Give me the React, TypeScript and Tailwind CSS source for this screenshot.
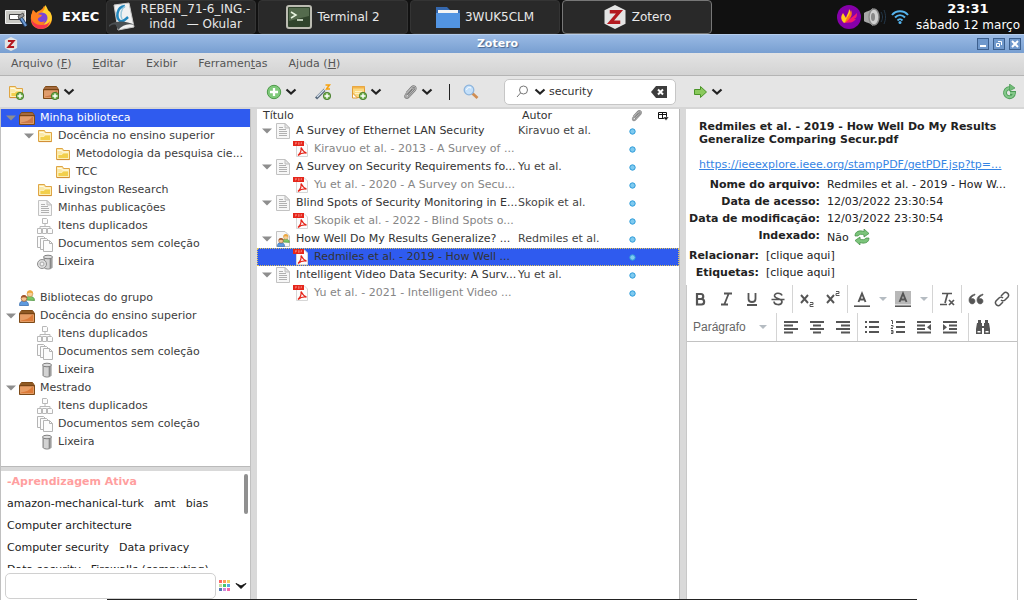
import React, { useState } from 'react';
import { clsx } from 'clsx';

type IconName =
  | 'library' | 'group' | 'folder' | 'page' | 'duplicates' | 'unfiled' | 'trashFull' | 'trash' | 'people' | 'pagePeople' | 'pdf';

interface TreeNode {
  label: string;
  icon: IconName;
  level: number;
  open?: boolean;
  selected?: boolean;
}

interface Item {
  title: string;
  author?: string;
  icon: IconName;
  selected?: boolean;
}

const libraryTree: (TreeNode | null)[] = [
  { label: 'Minha biblioteca', icon: 'library', level: 0, open: true, selected: true },
  { label: 'Docência no ensino superior', icon: 'folder', level: 1, open: true },
  { label: 'Metodologia da pesquisa cie...', icon: 'folder', level: 2 },
  { label: 'TCC', icon: 'folder', level: 2 },
  { label: 'Livingston Research', icon: 'folder', level: 1 },
  { label: 'Minhas publicações', icon: 'page', level: 1 },
  { label: 'Itens duplicados', icon: 'duplicates', level: 1 },
  { label: 'Documentos sem coleção', icon: 'unfiled', level: 1 },
  { label: 'Lixeira', icon: 'trashFull', level: 1 },
  null,
  { label: 'Bibliotecas do grupo', icon: 'people', level: 0 },
  { label: 'Docência do ensino superior', icon: 'group', level: 0, open: true },
  { label: 'Itens duplicados', icon: 'duplicates', level: 1 },
  { label: 'Documentos sem coleção', icon: 'unfiled', level: 1 },
  { label: 'Lixeira', icon: 'trash', level: 1 },
  { label: 'Mestrado', icon: 'group', level: 0, open: true },
  { label: 'Itens duplicados', icon: 'duplicates', level: 1 },
  { label: 'Documentos sem coleção', icon: 'unfiled', level: 1 },
  { label: 'Lixeira', icon: 'trash', level: 1 },
];

const items: Item[] = [
  { title: 'A Survey of Ethernet LAN Security', author: 'Kiravuo et al.', icon: 'page' },
  { title: 'Kiravuo et al. - 2013 - A Survey of ...', icon: 'pdf' },
  { title: 'A Survey on Security Requirements fo...', author: 'Yu et al.', icon: 'page' },
  { title: 'Yu et al. - 2020 - A Survey on Secu...', icon: 'pdf' },
  { title: 'Blind Spots of Security Monitoring in E...', author: 'Skopik et al.', icon: 'page' },
  { title: 'Skopik et al. - 2022 - Blind Spots o...', icon: 'pdf' },
  { title: 'How Well Do My Results Generalize? ...', author: 'Redmiles et al.', icon: 'pagePeople' },
  { title: 'Redmiles et al. - 2019 - How Well ...', icon: 'pdf', selected: true },
  { title: 'Intelligent Video Data Security: A Surv...', author: 'Yu et al.', icon: 'page' },
  { title: 'Yu et al. - 2021 - Intelligent Video ...', icon: 'pdf' },
];

const tagRows = [
  ['amazon-mechanical-turk', 'amt', 'bias'],
  ['Computer architecture'],
  ['Computer security', 'Data privacy'],
  ['Data security', 'Firewalls (computing)'],
];

const fileInfo = [
  { label: 'Nome do arquivo:', value: 'Redmiles et al. - 2019 - How W...' },
  { label: 'Data de acesso:', value: '12/03/2022 23:30:54' },
  { label: 'Data de modificação:', value: '12/03/2022 23:30:54' },
];

/* ---------- icons ---------- */

function Svg({ size = 16, children }: { size?: number; children: React.ReactNode }) {
  return (
    <svg width={size} height={size} viewBox="0 0 16 16" fill="none" className="block shrink-0" aria-hidden="true">
      {children}
    </svg>
  );
}

function Box({ bright }: { bright?: boolean }) {
  return (
    <>
      <path d="M2.5 2.5h11l2 3v9H.5v-9z" fill="#b5652d" stroke="#7d4a17" />
      <path d="M2.8 3h10.4l1.600 2H1.200z" fill={bright ? '#8f5a24' : '#a56a3c'} />
      <path d="M1.500 6.500h13v7h-13z" fill={bright ? '#dc7a38' : '#cc7848'} stroke="#ecb07c" strokeWidth=".7" />
      <path d="M2 12.500V7h11c-2 3-6 5-11 5.500z" fill="#f0b98a" opacity=".55" />
      <path d="M.5 5.700h15" stroke="#6b3d10" />
    </>
  );
}

function Folder() {
  return (
    <>
      <path d="M1.5 13.5v-11h6l1 2h6v9z" fill="#fbe8a6" stroke="#dfa544" />
      <path d="M2.5 4.5h4l1 1.5h6" stroke="#fffbe9" />
      <path d="M3 12.5V8.5h4l1-1.5h5.5v5.5z" fill="#f2cf4c" stroke="#fff6cf" strokeWidth=".7" />
      <path d="M2 13.6h12.5" stroke="#d18d35" />
    </>
  );
}

function Page() {
  return (
    <>
      <path d="M1.500.5h8.500l4.500 4.500v10.500h-13z" fill="#f7f7f7" stroke="#c2c2c2" />
      <path d="M10 .5V5h4.500z" fill="#e8e8e8" stroke="#bdbdbd" />
      <path d="M4 4.500h4M4 6.500h7M4 8.500h8M4 10.500h8M4 12.500h8" stroke="#b0b0b0" />
    </>
  );
}

function People() {
  return (
    <>
      <path d="M6.500 10c0-3 2-3.500 4.500-3.500s4.500 1 4.500 4z" fill="#7cc765" stroke="#3f8a33" strokeWidth=".7" />
      <circle cx="11" cy="3.800" r="2.900" fill="#f7cf98" stroke="#c08b3c" strokeWidth=".6" />
      <path d="M8 3.500c-.5-4.500 6.500-4.500 6 0-2-1-4-1-6 0z" fill="#eda73f" />
      <path d="M.5 15.500c0-4 2-4.500 4.500-4.500s4.500 1 4.500 4.500z" fill="#5e9ade" stroke="#2a62a8" strokeWidth=".7" />
      <circle cx="5" cy="8.500" r="2.900" fill="#f5c28e" stroke="#8a4a20" strokeWidth=".6" />
      <path d="M2 8c0-4 6-4 6 0-2-1-4-1-6 0z" fill="#a3562a" />
    </>
  );
}

function Can({ x = 0 }: { x?: number }) {
  return (
    <g transform={`translate(${x} 0)`}>
      <path d="M4 3.500h8v10c-1 2-7 2-8 0z" fill="#b9b9b9" stroke="#858585" />
      <path d="M6 5v9M8 5v9.500" stroke="#ededed" />
      <path d="M10.500 5v9" stroke="#888" />
      <ellipse cx="8" cy="3" rx="4.500" ry="1.800" fill="#dcdcdc" stroke="#808080" />
    </g>
  );
}

function TreeIcon({ name }: { name: IconName }) {
  return (
    <Svg>
      {name === 'library' && <Box />}
      {name === 'group' && <Box bright />}
      {name === 'folder' && <Folder />}
      {name === 'page' && <Page />}
      {name === 'people' && <People />}
      {name === 'trash' && <Can x={2} />}
      {name === 'pagePeople' && (
        <>
          <path d="M1.500.5h8.500l4.500 4.500v10.500h-13z" fill="#f7f7f7" stroke="#c2c2c2" />
          <g transform="translate(2 3) scale(.8)"><People /></g>
        </>
      )}
      {name === 'duplicates' && (
        <g fill="#fcfcfc" stroke="#b8b8b8">
          <path d="M5.500.5h4l1 1v4h-5zM8 6v2.500M3 10V8.500h10V10M.5 10.500h4v5h-4zM5.500 10.500h4v5h-4zM10.500 10.500h4l1 1v4h-5z" />
        </g>
      )}
      {name === 'unfiled' && (
        <g fill="#fcfcfc" stroke="#b4b4b4">
          <path d="M.5.5h6l2 2v9h-8z" />
          <path d="M3.500 2.500h6l2 2v9h-8z" />
          <path d="M6.500 4.500h6l3 3v8h-9z" />
          <path d="M12.500 4.500v3h3" fill="none" />
        </g>
      )}
      {name === 'trashFull' && (
        <>
          <Can x={3} />
          <circle cx="5" cy="10" r="4.500" fill="#dedede" stroke="#8e8e8e" />
          <circle cx="5" cy="10" r="2" fill="#f1f1f1" stroke="#a9a9a9" />
        </>
      )}
      {name === 'pdf' && (
        <>
          <path d="M3.500.5h7.500l3.500 3.500v11.500h-11z" fill="#fcfcfc" stroke="#d6d6d6" />
          <path d="M0 0h11v5H0z" fill="#e5261b" />
          <path d="M2.500 3.500v-2h1v1h-1M5.500 1.500v2h.7v-2zM8 3.500v-2h1M8 2.500h1" stroke="#f9a39d" strokeWidth=".5" />
          <path d="M8 6.500c1.500 3 2.500 4.500 5.500 5.500-3-.5-5.500 0-8.500 2.500 2.500-2.500 3.700-5 3-8z" stroke="#e5261b" strokeWidth="1.300" />
        </>
      )}
    </Svg>
  );
}

function Plus() {
  return (
    <>
      <circle cx="12" cy="12" r="3.700" fill="#6fae4b" stroke="#3d7424" strokeWidth=".8" />
      <path d="M12 9.500v5M9.500 12h5" stroke="#fff" strokeWidth="1.400" />
    </>
  );
}

function Chevron() {
  return (
    <svg width="12" height="8" viewBox="0 0 12 8" className="block shrink-0" aria-hidden="true">
      <path d="M1.500 1.500 6 5.500l4.500-4" fill="none" stroke="#222" strokeWidth="2.200" />
    </svg>
  );
}

function Clip({ size = 16 }: { size?: number }) {
  const wire = 'M6 11.500 11 6c1-1.200 0-2.500-1.500-1.500L4 10.500c-2 2.500.5 4.500 2.500 2.500l6.500-7c2-2.500-1-5-3.500-2.500L4.500 9';
  return (
    <Svg size={size}>
      <path d={wire} stroke="#777" strokeWidth="2" />
      <path d={wire} stroke="#cfcfcf" strokeWidth=".8" />
    </Svg>
  );
}

function Twisty() {
  return (
    <svg width="10" height="6" viewBox="0 0 10 6" className="block" aria-hidden="true">
      <path d="M0 .5h10L5 5.500z" fill="#8e8e8e" />
    </svg>
  );
}

function ZoteroHex({ size }: { size: number }) {
  return (
    <Svg size={size}>
      <path d="m8 0 7 3.500v9L8 16l-7-3.500v-9z" fill="#e4e4e4" />
      <path d="M4.500 4.500h6.500L5 11.500h6.500" stroke="#b3191f" strokeWidth="2.200" />
    </Svg>
  );
}

/* ---------- desktop panel ---------- */

function TaskButton({ active, children }: { active?: boolean; children: React.ReactNode }) {
  return (
    <button
      type="button"
      className={clsx(
        'h-[34px] w-[150px] shrink-0 flex items-center justify-center gap-[5px] rounded-[4px] border bg-[#292929] text-xs leading-[15px] text-[#e8e8e8]',
        active ? 'border-[#777]' : 'border-[#343434]'
      )}
    >
      {children}
    </button>
  );
}

function Taskbar() {
  return (
    <div className="flex h-[34px] shrink-0 items-center bg-[#111] text-white">
      <div className="flex h-full w-[106px] shrink-0 items-center bg-[#202020] pl-1">
        <svg width="24" height="24" viewBox="0 0 24 24" fill="none" aria-hidden="true">
          <path d="M1.500 5.500h20v13h-20z" fill="#c9c9c4" stroke="#efefef" />
          <path d="M5.500 9.500h12v5h-12z" fill="#fff" stroke="#444" />
          <path d="m16 12 6 9" stroke="#203f68" strokeWidth="4" />
          <path d="m17 13 5 8" stroke="#6c9ad3" strokeWidth="2" />
          <path d="m14 11 5-3 1 3-5 3z" fill="#999" stroke="#555" />
        </svg>
        <svg width="26" height="26" viewBox="0 0 26 26" className="ml-px" aria-hidden="true">
          <path d="M15 2c4 3 3 5 6 6 4 6 2 16-8 17C4 25 1 19 2 12L4 6l3 3c3-3 6-2 8-7z" fill="#ff8a16" />
          <path d="M16 1c3 3 2 5 5 7 5 8-1 15-8 15 5-5 5-9-1-14 3-2 4-4 4-8z" fill="#ffd02e" />
          <circle cx="13" cy="14" r="5.500" fill="#7a45d6" />
          <path d="M2 12l2-6 4 4 5 1c-1 3-5 2-4 5 2 3 5 2 7 1-2 6-13 5-14-5z" fill="#ff8020" />
          <path d="M2 14c1 4 5 7 10 7 4 0 7-1 9-4-1 5-5 8-9 8-6 0-10-5-10-11z" fill="#f5354f" />
        </svg>
        <span className="ml-[7px] text-[13px] font-bold">EXEC</span>
      </div>
      <div className="flex flex-1 gap-[2px]">
        <TaskButton>
          <svg width="28" height="30" viewBox="0 0 28 30" fill="none" className="-ml-1 shrink-0" aria-hidden="true">
            <path d="M6 3 21 1l5 24-16 3z" fill="#f1f1f1" stroke="#c7c7c7" />
            <path d="M17 4c-9 1-9 12-5 15 4 1 6-2 8-4" stroke="#2387bd" strokeWidth="2.500" />
            <path d="M17 4c-4 3-5 9-3 13" stroke="#9ac8dc" strokeWidth="1.500" />
            <path d="M1 23c8-5 17-4 26 0-8-2-12 0-17 5L8 23c-3-1-5 0-7 2z" fill="#4b5053" />
          </svg>
          <span className="whitespace-pre text-center">{'REBEN_71-6_ING.-\nindd   — Okular'}</span>
        </TaskButton>
        <TaskButton>
          <svg width="26" height="24" viewBox="0 0 26 24" fill="none" aria-hidden="true">
            <rect x="1" y="1" width="24" height="22" rx="2" fill="#30442c" stroke="#bcbcb2" strokeWidth="2" />
            <path d="M3 3h20v8L3 16z" fill="#546b4d" />
            <path d="m5 7 5 3-5 3M11 15h6" stroke="#e7f4df" strokeWidth="1.500" />
          </svg>
          <span>Terminal 2</span>
        </TaskButton>
        <TaskButton>
          <svg width="24" height="22" viewBox="0 0 24 22" aria-hidden="true">
            <path d="M0 1h11l3 3h10v8H0z" fill="#3568ae" />
            <path d="M2 4h20v3H2z" fill="#f4f4f4" />
            <path d="M0 7h24v15H0z" fill="#5294e2" />
          </svg>
          <span>3WUK5CLM</span>
        </TaskButton>
        <TaskButton active>
          <ZoteroHex size={24} />
          <span>Zotero</span>
        </TaskButton>
      </div>
      <div className="flex shrink-0 items-center pr-1">
        <svg width="24" height="24" viewBox="0 0 24 24" aria-hidden="true">
          <circle cx="12" cy="12" r="12" fill="#8600a9" />
          <path d="M7 18C3 14 4 11 6 8c1 2 2 3 3 5 1-4 3-5 3-9 3 4 1 8-3 13z" fill="#ffd018" />
          <path d="M8 18c1-5 4-7 6-13 2 5 0 7-3 11z" fill="#ff7817" />
          <path d="M8 18c4-4 8-6 12-10 0 4-1 5-3 6l2 0c-4 5-7 3-11 4z" fill="#f5196c" />
        </svg>
        <svg width="24" height="20" viewBox="0 0 24 20" fill="none" className="mx-[2px]" aria-hidden="true">
          <path d="M1 6c2-2 5-1 9-5v18c-4-4-7-3-9-5z" fill="#a7a7a7" />
          <ellipse cx="11" cy="10" rx="5" ry="8" fill="#cfcfcf" stroke="#8a8a8a" strokeWidth="1.500" />
          <ellipse cx="10" cy="10" rx="2" ry="4" fill="#888" />
          <path d="M18 5c2 3 2 7 0 10M21 3c2 5 2 9 0 14" stroke="#24384a" />
        </svg>
        <svg width="18" height="16" viewBox="0 0 18 16" fill="none" className="ml-[2px] mr-[7px]" aria-hidden="true">
          <path d="M1 6c4-5 12-5 16 0M4 8.500c3-3 7-3 10 0M6.500 11.500c2-2 3-2 5 0" stroke="#55b4ee" strokeWidth="2" />
          <circle cx="9" cy="13.500" r="1.500" fill="#55b4ee" />
        </svg>
        <div className="text-center leading-4">
          <div className="text-[13px] font-bold">23:31</div>
          <div className="text-xs">sábado 12 março</div>
        </div>
      </div>
    </div>
  );
}

/* ---------- window chrome ---------- */

function TitleBar() {
  const button = 'flex size-3 items-center justify-center border border-[#3c5f8e] bg-[#6f98cc]';
  return (
    <div className="flex h-[19px] shrink-0 items-center border-t border-[#b5cdec] bg-linear-to-b from-[#99b9e4] to-[#789fd1] pl-1 pr-[3px]">
      <ZoteroHex size={14} />
      <h1 className="flex-1 text-center text-[11px] font-bold text-white [text-shadow:1px_1px_1px_#4a6890]">Zotero</h1>
      <div className="flex justify-end gap-1">
        <button type="button" aria-label="Minimizar" className={button}>
          <svg width="8" height="8" viewBox="0 0 8 8"><path d="M1 6h6" stroke="#fff" strokeWidth="2" /></svg>
        </button>
        <button type="button" aria-label="Restaurar" className={button}>
          <svg width="8" height="8" viewBox="0 0 8 8" fill="none" stroke="#fff"><path d="M1.500 3.500h3v3h-3zM3 1.500h3.500V5" /></svg>
        </button>
        <button type="button" aria-label="Fechar" className={button}>
          <svg width="8" height="8" viewBox="0 0 8 8" stroke="#fff" strokeWidth="2"><path d="m1 1 6 6M7 1 1 7" /></svg>
        </button>
      </div>
    </div>
  );
}

function MenuBar() {
  return (
    <nav className="flex h-[23px] shrink-0 items-center gap-[21px] border-b border-[#b4b4b4] bg-linear-to-b from-[#e3e3e3] to-[#d3d3d3] pl-[11px] text-[#555]">
      <button type="button">Arquivo (<u>F</u>)</button>
      <button type="button"><u>E</u>ditar</button>
      <button type="button">Exibir</button>
      <button type="button">Ferramen<u>t</u>as</button>
      <button type="button">Ajuda (<u>H</u>)</button>
    </nav>
  );
}

function Toolbar() {
  const [query, setQuery] = useState('security');
  return (
    <div className="flex h-[33px] shrink-0 items-center border-b-2 border-[#d6d6d6] bg-[#e5e5e5]">
      <div className="flex w-[257px] shrink-0 items-center gap-[19px] pl-[8px]">
        <button type="button" aria-label="Nova coleção"><Svg><Folder /><Plus /></Svg></button>
        <button type="button" aria-label="Nova biblioteca" className="flex items-center gap-1"><Svg><Box /><Plus /></Svg><Chevron /></button>
      </div>
      <div className="flex min-w-0 flex-1 items-center">
        <button type="button" aria-label="Novo item" className="ml-[9px] flex items-center gap-[3px]">
          <Svg>
            <circle cx="8" cy="8" r="6.700" fill="#7fc97b" stroke="#4c9a48" />
            <path d="M8 4v8M4 8h8" stroke="#fff" strokeWidth="2.300" />
          </Svg>
          <Chevron />
        </button>
        <button type="button" aria-label="Adicionar por identificador" className="ml-[18px]">
          <Svg>
            <path d="m1 14.500 10-10" stroke="#56677a" strokeWidth="3" />
            <path d="m2 13 7-7" stroke="#d2dfec" strokeWidth="1.300" />
            <path d="m9.500 6 2-2" stroke="#f3f3f3" strokeWidth="2.500" />
            <path d="M10.500 1h4l-3 4H15" stroke="#f7a10d" strokeWidth="1.600" />
            <Plus />
          </Svg>
        </button>
        <button type="button" aria-label="Nova nota" className="ml-5 flex items-center gap-[3px]">
          <Svg>
            <path d="M1.500 2.500h12v11h-12z" fill="#fbd982" stroke="#df9b36" />
            <path d="M1.500 3.500h12" stroke="#f3b44c" strokeWidth="2" />
            <path d="M4 7.500h7M4 9.500h5" stroke="#fff2c6" />
            <path d="M1.500 9v5h5z" fill="#fff" stroke="#df9b36" />
            <Plus />
          </Svg>
          <Chevron />
        </button>
        <button type="button" aria-label="Adicionar anexo" className="ml-5 flex items-center gap-[3px]"><Clip /><Chevron /></button>
        <span className="ml-4 h-4 w-px bg-[#222]" />
        <button type="button" aria-label="Busca avançada" className="ml-[13px]">
          <Svg>
            <path d="m9 9 5.500 5" stroke="#cf8d53" strokeWidth="2.800" />
            <circle cx="6" cy="6" r="4.800" fill="#c4e0fa" stroke="#8db4dc" strokeWidth="1.300" />
            <path d="M3.500 6C4 3.500 6 3 8 4" stroke="#fff" />
          </Svg>
        </button>
        <div className="ml-auto mr-[10px] flex h-[26px] w-[172px] items-center rounded-[5px] border border-[#c6c6c6] bg-white pl-[11px] pr-[8px]">
          <svg width="13" height="13" viewBox="0 0 13 13" fill="none" className="shrink-0" stroke="#777" aria-hidden="true">
            <circle cx="7.500" cy="5" r="4" /><path d="m4.500 8-3.500 4" />
          </svg>
          <button type="button" aria-label="Modo de busca" className="ml-[5px]"><Chevron /></button>
          <input
            type="text"
            aria-label="Buscar"
            value={query}
            onChange={(e) => setQuery(e.target.value)}
            className="ml-[3px] min-w-0 flex-1 bg-transparent text-[#333] outline-none"
          />
          <button type="button" aria-label="Limpar" onClick={() => setQuery('')}>
            <svg width="16" height="12" viewBox="0 0 16 12" fill="none">
              <path d="M5 0h11v12H5L0 6z" fill="#3d3d3d" /><path d="m7 3.500 5 5m0-5-5 5" stroke="#fff" strokeWidth="2" />
            </svg>
          </button>
        </div>
      </div>
      <div className="flex w-[338px] shrink-0 items-center justify-between px-[7px]">
        <button type="button" aria-label="Localizar" className="flex items-center gap-[2px]">
          <Svg><path d="M1.500 5.500h6v-3l6 5.500-6 5.500v-3h-6z" fill="#8ac95c" stroke="#4a9428" /></Svg>
          <Chevron />
        </button>
        <button type="button" aria-label="Sincronizar">
          <Svg>
            <path d="M10 4.500A4.500 4.500 0 1 0 13 9H9" stroke="#4b9b55" strokeWidth="3.800" />
            <path d="M10 4.500A4.500 4.500 0 1 0 13 9H9" stroke="#83c789" strokeWidth="2.200" />
            <path d="M8.500 7V0l5.500 4z" fill="#72bb78" stroke="#4b9b55" strokeWidth=".7" />
          </Svg>
        </button>
      </div>
    </div>
  );
}

/* ---------- left pane ---------- */

function CollectionsPane() {
  return (
    <aside className="flex w-[251px] shrink-0 flex-col border-x border-x-[#c0c0c0]">
      <div role="tree" className="min-h-0 flex-1 overflow-hidden border-b border-[#bababa] bg-white">
        {libraryTree.map((node, idx) =>
          node ? (
            <div
              key={idx}
              role="treeitem"
              aria-selected={!!node.selected}
              className={clsx(
                'flex h-[18px] items-center',
                node.level === 0 && 'pl-[5px]',
                node.level === 1 && 'pl-[23px]',
                node.level === 2 && 'pl-[41px]',
                node.selected ? 'bg-[#2f5bef] text-white' : 'text-[#3d3d3d]'
              )}
            >
              <span className="w-[13px] shrink-0">{node.open && <Twisty />}</span>
              <TreeIcon name={node.icon} />
              <span className="ml-[5px] whitespace-nowrap">{node.label}</span>
            </div>
          ) : (
            <div key={idx} className="h-[18px]" />
          )
        )}
      </div>
      <div className="h-1 shrink-0 bg-[#d9d9d9]" />
      <div className="flex h-[97px] shrink-0 overflow-hidden bg-white pl-[6px] pr-[2px]">
        <div className="flex-1 leading-[22px] text-[#222]">
          <button type="button" className="block font-bold text-[#ff9f9f]">-Aprendizagem Ativa</button>
          {tagRows.map((row) => (
            <div key={row[0]} className="flex gap-[10px]">
              {row.map((tag) => (
                <button type="button" key={tag}>{tag}</button>
              ))}
            </div>
          ))}
        </div>
        <div className="mt-[3px] h-10 w-1 rounded-full bg-[#909090]" />
      </div>
      <div className="flex h-8 shrink-0 items-center bg-white pl-1 pr-[3px] pt-[3px]">
        <input type="text" aria-label="Filtrar etiquetas" className="h-[26px] min-w-0 flex-1 rounded-[5px] border border-[#d0d0d0] px-2 outline-none" />
        <button type="button" aria-label="Ações de etiquetas" className="ml-[3px] flex items-center gap-1">
          <svg width="12" height="12" viewBox="0 0 12 12" aria-hidden="true">
            <path d="M0 0h3v3H0z" fill="#ff6666" /><path d="M4 0h3v3H4z" fill="#ff9b5e" /><path d="M8 0h3v3H8z" fill="#f5cf62" />
            <path d="M0 4h3v3H0z" fill="#c5dea3" /><path d="M4 4h3v3H4z" fill="#45c66d" /><path d="M8 4h3v3H8z" fill="#55a9e8" />
            <path d="M0 8h3v3H0z" fill="#5478b5" /><path d="M4 8h3v3H4z" fill="#cf8add" /><path d="M8 8h3v3H8z" fill="#f768a9" />
          </svg>
          <svg width="12" height="8" viewBox="0 0 12 8" aria-hidden="true">
            <path d="M1 1.500 6 4l5-2.500L6 6.500z" fill="#111" stroke="#111" />
          </svg>
        </button>
      </div>
    </aside>
  );
}

/* ---------- items list ---------- */

function ItemsPane() {
  return (
    <section className="min-w-0 flex-1 overflow-hidden border-r border-[#b8b8b8] bg-white">
      <table className="w-full table-fixed border-collapse text-left">
        <colgroup>
          <col />
          <col className="w-[104px]" />
          <col className="w-[28px]" />
          <col className="w-[33px]" />
        </colgroup>
        <thead>
          <tr className="h-[13px] leading-[13px] text-[#333]">
            <th className="p-0 pl-[6px] font-normal">Título</th>
            <th className="p-0 pl-[8px] font-normal">Autor</th>
            <th className="p-0"><span className="flex h-[13px] items-center justify-center pl-2"><Clip size={13} /></span></th>
            <th className="p-0">
              <button type="button" aria-label="Escolher colunas" className="ml-[12px] flex h-[13px] items-center">
                <svg width="12" height="11" viewBox="0 0 12 11" fill="none">
                  <path d="M.5 2.500h8v6h-8zM.5 4.500h8M4.500 2v7" stroke="#111" />
                  <path d="M5 7h6L8 10.500z" fill="#111" stroke="#fff" strokeWidth=".5" />
                </svg>
              </button>
            </th>
          </tr>
        </thead>
        <tbody>
          {items.map((item) => (
            <tr
              key={item.title}
              className={clsx('h-[18px]', item.selected && 'bg-[#2f5bef] outline-1 -outline-offset-1 outline-dotted outline-[#e3c75a]')}
            >
              <td className="p-0">
                <div className={clsx('flex h-[18px] items-center', item.author ? 'pl-[5px]' : 'pl-[23px]')}>
                  <span className="w-[13px] shrink-0">{item.author && <Twisty />}</span>
                  <TreeIcon name={item.icon} />
                  <span className={clsx('ml-[5px] whitespace-nowrap', item.author || item.selected ? 'text-[#333]' : 'text-[#858585]')}>
                    {item.title}
                  </span>
                </div>
              </td>
              <td className="p-0 pl-1 text-[#444]">{item.author}</td>
              <td className="p-0">
                <svg width="7" height="7" viewBox="0 0 7 7" className="mx-auto block" aria-hidden="true">
                  <circle cx="3.500" cy="3.500" r="2.700" fill="#7fcaf0" stroke="#2e9bd8" />
                </svg>
              </td>
              <td className="p-0" />
            </tr>
          ))}
        </tbody>
      </table>
    </section>
  );
}

/* ---------- note editor ---------- */

function EditorButton({ label, children }: { label: string; children: React.ReactNode }) {
  return (
    <button type="button" aria-label={label} className="flex h-7 w-[26px] shrink-0 items-center justify-center">
      <Svg>{children}</Svg>
    </button>
  );
}

function Divider() {
  return <span className="mx-px h-7 w-px shrink-0 bg-[#d4d4d4]" />;
}

function Caret() {
  return (
    <svg width="8" height="4" viewBox="0 0 8 4" className="shrink-0" aria-hidden="true"><path d="M0 0h8L4 4z" fill="#b5bcc2" /></svg>
  );
}

function NoteEditor() {
  const ink = '#555';
  return (
    <div className="mr-[6px] flex min-h-0 flex-1 flex-col border-x border-[#c8c8c8]">
      <div className="shrink-0 overflow-hidden border-b border-[#c2c2c2]">
        <div className="flex h-7 items-center">
          <EditorButton label="Negrito"><path d="M5 3h4c3 0 3 5 0 5H5V3zm0 5h4.500c3.500 0 3.500 5.500 0 5.500H5z" stroke={ink} strokeWidth="2.200" /></EditorButton>
          <EditorButton label="Itálico"><path d="M6 2.500h8M3 13.500h7M10.500 3l-4 10" stroke={ink} strokeWidth="1.800" /></EditorButton>
          <EditorButton label="Sublinhado"><path d="M4.500 2v6c0 4 7 4 7 0V2M3 14h10" stroke={ink} strokeWidth="1.800" /></EditorButton>
          <EditorButton label="Tachado"><path d="M12 4.500c-1-3-8-3-7.500.5 1 3.500 8 2 7.500 6-1 4-8 3-8-.5M1.500 8.500h13" stroke={ink} strokeWidth="1.600" /></EditorButton>
          <Divider />
          <EditorButton label="Subscrito"><path d="m2 4 7 8M9 4l-7 8" stroke={ink} strokeWidth="1.900" /><path d="M11 11.500h3v2h-3v2h3.500" stroke={ink} /></EditorButton>
          <EditorButton label="Sobrescrito"><path d="m2 4 7 8M9 4l-7 8" stroke={ink} strokeWidth="1.900" /><path d="M11 .5h3v2h-3v2h3.500" stroke={ink} /></EditorButton>
          <Divider />
          <EditorButton label="Cor do texto"><path d="M4.500 11 8 2.500l3.500 8.500M6 8.500h4" stroke={ink} strokeWidth="1.900" /><path d="M0 15.200h16" stroke={ink} strokeWidth="1.600" /></EditorButton>
          <span className="flex w-[15px] justify-center"><Caret /></span>
          <EditorButton label="Cor de fundo"><path d="M0 0h16v13.500H0z" fill="#b8b8b8" /><path d="M4.500 11 8 2.500l3.500 8.500M6 8.500h4" stroke={ink} strokeWidth="1.900" /><path d="M0 15.200h16" stroke={ink} strokeWidth="1.600" /></EditorButton>
          <span className="flex w-[15px] justify-center"><Caret /></span>
          <Divider />
          <EditorButton label="Limpar formatação"><path d="M3 2.500h10M8.500 3 6 12M1 13.500h7M10 9l5 5m0-5-5 5" stroke={ink} strokeWidth="1.700" /></EditorButton>
          <Divider />
          <EditorButton label="Citação">
            <path d="M7 3C3 4 1 6 1 9c0 5 6 5 6 1 0-2-2-3-4-2 0-2 2-3 4-4zM15 3c-4 1-6 3-6 6 0 5 6 5 6 1 0-2-2-3-4-2 0-2 2-3 4-4z" fill={ink} stroke={ink} strokeWidth=".6" />
          </EditorButton>
          <EditorButton label="Link">
            <path d="m7 5 3-3c2-2 6 1 4 4l-3 3c-1 1-3 1-4 0M9 11l-3 3c-2 2-6-1-4-4l3-3c1-1 3-1 4 0" stroke={ink} strokeWidth="1.500" />
          </EditorButton>
        </div>
        <div className="flex h-7 items-center">
          <button type="button" className="flex w-[88px] shrink-0 items-center justify-between pl-[6px] pr-[8px] font-['Liberation_Sans',sans-serif] text-xs text-[#666]">
            Parágrafo <Caret />
          </button>
          <Divider />
          <EditorButton label="Alinhar à esquerda"><path d="M1 3h14M1 6.500h9M1 10h14M1 13.500h9" stroke={ink} strokeWidth="2" /></EditorButton>
          <EditorButton label="Centralizar"><path d="M1 3h14M4 6.500h8M1 10h14M4 13.500h8" stroke={ink} strokeWidth="2" /></EditorButton>
          <EditorButton label="Alinhar à direita"><path d="M1 3h14M6 6.500h9M1 10h14M6 13.500h9" stroke={ink} strokeWidth="2" /></EditorButton>
          <Divider />
          <EditorButton label="Lista"><path d="M5 3h10M5 8h10M5 13h10M1 3h2M1 8h2M1 13h2" stroke={ink} strokeWidth="2" /></EditorButton>
          <EditorButton label="Lista numerada"><path d="M6 3h9M6 8h9M6 13h9" stroke={ink} strokeWidth="2" /><path d="M1 1.500h1.500V5M1 6.500h2v1L1 9.500h2M1 11.500h2v3H1M1 13h2" stroke={ink} /></EditorButton>
          <EditorButton label="Diminuir recuo"><path d="M1 3h14M1 6.500h8M1 10h8M1 13.500h14" stroke={ink} strokeWidth="2" /><path d="m15 5-4 3.250 4 3.250z" fill={ink} /></EditorButton>
          <EditorButton label="Aumentar recuo"><path d="M1 3h14M7 6.500h8M7 10h8M1 13.500h14" stroke={ink} strokeWidth="2" /><path d="m1 5 4 3.250-4 3.250z" fill={ink} /></EditorButton>
          <span className="w-1" />
          <Divider />
          <EditorButton label="Localizar e substituir">
            <path d="M3 1h3v3h1v3h2V4h1V1h3v3h1l1 6v5H9V9H7v6H1v-5l1-6h1z" fill={ink} />
            <path d="M2.500 12h3v1.500h-3zM10.500 12h3v1.500h-3z" fill="#fff" />
          </EditorButton>
        </div>
      </div>
      <textarea aria-label="Nota" className="min-h-0 flex-1 resize-none bg-white p-2 outline-none" />
    </div>
  );
}

function DetailsPane() {
  return (
    <section className="flex w-[338px] shrink-0 flex-col bg-white text-[#222]">
      <div className="h-[176px] shrink-0">
        <h2 className="ml-[13px] mr-4 pt-[11px] font-bold leading-[13px]">
          Redmiles et al. - 2019 - How Well Do My Results Generalize Comparing Secur.pdf
        </h2>
        <a href="#attachment" className="ml-[13px] mt-3 block leading-[14px] text-[#3584e4] underline">
          https://ieeexplore.ieee.org/stampPDF/getPDF.jsp?tp=...
        </a>
        <dl className="mt-1 grid grid-cols-[134px_1fr] gap-x-[7px] leading-[17px]">
          {fileInfo.map((row) => (
            <React.Fragment key={row.label}>
              <dt className="whitespace-nowrap text-right font-bold">{row.label}</dt>
              <dd className="whitespace-nowrap">{row.value}</dd>
            </React.Fragment>
          ))}
          <dt className="text-right font-bold">Indexado:</dt>
          <dd className="flex h-5 items-center gap-[5px]">
            Não
            <button type="button" aria-label="Reindexar">
              <Svg>
                <path d="M1 7c0-5 5-6 9-4.500V0l5 4.500-5 3.500V6C8 5 5 5 4 7z" fill="#7cc47b" stroke="#3f8d42" strokeWidth=".7" />
                <path d="M15 9c0 5-5 6-9 4.500V16l-5-4.500L6 8v2c2 1 5 1 6-1z" fill="#7cc47b" stroke="#3f8d42" strokeWidth=".7" />
              </Svg>
            </button>
          </dd>
        </dl>
        <dl className="grid grid-cols-[73px_1fr] gap-x-[7px] leading-[17px]">
          <dt className="text-right font-bold">Relacionar:</dt>
          <dd><button type="button">[clique aqui]</button></dd>
          <dt className="text-right font-bold">Etiquetas:</dt>
          <dd><button type="button">[clique aqui]</button></dd>
        </dl>
      </div>
      <NoteEditor />
    </section>
  );
}

export default function App() {
  return (
    <div className="relative flex h-screen flex-col overflow-hidden bg-[#d9d9d9] font-['DejaVu_Sans',sans-serif] text-[11px] leading-[18px]">
      <Taskbar />
      <TitleBar />
      <MenuBar />
      <Toolbar />
      <main className="flex min-h-0 flex-1">
        <CollectionsPane />
        <div className="w-[6px] shrink-0 bg-[#d9d9d9]" />
        <ItemsPane />
        <div className="w-[6px] shrink-0 bg-[#d9d9d9]" />
        <DetailsPane />
      </main>
      {/* edge of the auto-hidden dock */}
      <div className="absolute bottom-0 left-[107px] right-[107px] h-px bg-[#222]" />
    </div>
  );
}
